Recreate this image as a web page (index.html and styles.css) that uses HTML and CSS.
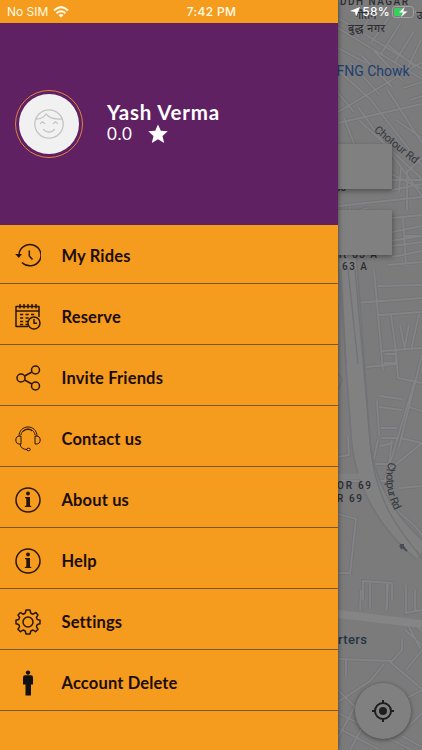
FILE: index.html
```html
<!DOCTYPE html>
<html lang="en">
<head>
<meta charset="utf-8">
<title>Menu</title>
<link rel="stylesheet" href="styles.css">
</head>
<body>
<svg class="map" width="422" height="750" viewBox="0 0 422 750">
  <defs>
    <g id="roads" fill="none">
      <path d="M338 18L422 69M338 28L422 79M338 112L422 62M338 123L422 104M344 118L371 187M358 107L422 196M370 99L422 166M387 89L422 143M338 70L370 99M350 62L380 95M361 55L392 87M374 51L402 80M388 45L416 67M338 48L366 63M400 24L381 54M414 31L395 62M421 40L408 67M374 11L357 37M389 17L371 43M338 93L354 112M403 88L422 82M410 100L422 96"/>
      <path d="M359 120L422 179M390 142L385 171L422 189M396 120L422 138M401 168L399 192M407 172L422 158M392 180H422M392 190L422 184M407 170V210M338 206L422 197M350 207L352 270M338 217L368 208M352 247L422 236M392 218L422 215M392 232L422 226M403 218L406 266M392 246L422 242M405 236H422M392 257L422 251M388 265L422 262"/>
      <path d="M374 270L383 370M354 303L422 298M378 286L422 285M379 315L422 312M382 351L422 348M366 367L396 364M391 315L396 351L398 378L422 383M400 325L405 350M409 325L404 350M419 314L411 350M385 354H396V363H384M422 355L399 447M415 380L385 480M408 407L422 411M400 438L422 443M380 396L402 399M377 401L379 435M379 407L402 410M381 428H396M382 438H397M380 446L393 443"/>
      <path d="M338 457L349 455L348 437M338 481H386M338 514L356 519L350 574M338 573H349M373 463L378 440M373 464H389L392 440M389 470L422 443M399 488L422 486M387 492C388 510 414 520 422 535M363 600V581L392 583V600M370 583V609M387 583V609"/>
      <path d="M361 590L360 610M388 584L386 611M406 585V613L422 610M415 590V612M338 659L392 661L402 650V639M389 661L422 689M384 664L370 681L338 702M346 660V675M422 650L406 670M405 630L422 645M411 622L422 631M338 713L412 750M338 728L380 750M356 704L338 738M371 712L350 750M338 690L360 712M398 703L422 690M410 725L422 713M402 736L422 747M408 625L420 648"/>
    </g>
    <path id="chotour" d="M373.500 131L420 168.500"/>
    <path id="chotpur" d="M388.500 462Q382 488 396 513"/>
  </defs>
  <rect width="422" height="750" fill="#7b7b7c"/>
  <use href="#roads" stroke="#737477" stroke-width="3.6"/>
  <use href="#roads" stroke="#848486" stroke-width="1.8"/>
  <g fill="none" stroke-linecap="butt">
    <path d="M346 240L360 430C362 485 390 525 422 552" stroke="#737477" stroke-width="20"/>
    <path d="M346 240L360 430C362 485 390 525 422 552" stroke="#818182" stroke-width="17"/>
    <path d="M341 269L346 364M348 269L358 364M355 269L370 440C374 500 400 532 422 558" stroke="#707275" stroke-width="1.3"/>
    <path d="M338 614L422 624" stroke="#858586" stroke-width="8"/>
    <path d="M338 477L374 476" stroke="#818182" stroke-width="6"/>
    <path d="M338 373L342 380L338 390" stroke="#707174" stroke-width="1.5"/>
  </g>
  <path d="M400 545L407 551M400 545L404 545M400 545L405 548M400 545L402 549" stroke="#4b4d55" stroke-width="2"/>
  <g class="labels">
    <text x="332" y="5" textLength="76">UDDH NAGAR</text>
    <text class="hindi" x="355" y="19">गौतम</text>
    <text class="hindi" x="348" y="32" textLength="37">बुद्ध नगर</text>
    <text class="hindi" x="416.500" y="19">उ</text>
    <text class="place" x="336.500" y="75.500" textLength="73">FNG Chowk</text>
    <text class="road"><textPath href="#chotour" textLength="53">Chotour Rd</textPath></text>
    <text class="road"><textPath href="#chotpur" textLength="50">Chotpur Rd</textPath></text>
    <text x="335" y="191">63</text>
    <text x="336" y="258" textLength="41">nt 63 A</text>
    <text x="342" y="270" textLength="25">63 A</text>
    <text x="337" y="489" textLength="34">OR 69</text>
    <text x="337" y="502" textLength="25">R 69</text>
    <text class="quarters" x="338" y="644" textLength="29">rters</text>
  </g>
</svg>

<div class="fields"><div class="field"></div><div class="field"></div></div>
<div class="locate">
  <svg width="24" height="24" viewBox="0 0 24 24" fill="none" stroke="#1e1e1e" stroke-width="2"><circle cx="12" cy="12" r="8"/><circle cx="12" cy="12" r="4" fill="#1e1e1e" stroke="none"/><path d="M12 1v4M12 19v4M1 12h4M19 12h4"/></svg>
</div>

<aside class="drawer">
  <header class="profile">
    <div class="avatar"><div class="face">
      <svg width="32" height="32" viewBox="0 0 32 32" fill="none" stroke="#c4c4c4" stroke-width="1.300" stroke-linecap="round"><circle cx="16" cy="16" r="14.200"/><path d="M3 11Q10 11 13 6Q18 12 29 11M7.500 15.500q2-3 4 0M20.500 15.500q2-3 4 0M10.500 21.500Q16 27 21.500 21.500"/></svg>
    </div></div>
    <div class="who">
      <div class="name">Yash Verma</div>
      <div class="rating"><span>0.0</span><svg width="20" height="20" viewBox="0 0 20 20"><path fill="#fff" d="M10 0.400L12.800 6.800L19.800 7.300L14.500 12L16.200 19L10 15.300L3.800 19L5.500 12L0.200 7.300L7.200 6.800Z"/></svg></div>
    </div>
  </header>
  <nav class="menu">
    <a class="item"><svg class="icon" viewBox="0 0 26 26"><path d="M4 12A11 10.600 0 1 1 7 19.500M14.300 7.500V13L17.500 16.500"/><path class="solid" d="M0.200 11H7L3.800 15Z"/></svg><span>My Rides</span></a>
    <a class="item"><svg class="icon" viewBox="0 0 26 26"><path d="M13 22.500H1V2.500H24V13M1 7H24M5 0V4.500M9 0V4.500M13 0V4.500M17 0V4.500M21 0V4.500"/><path stroke-dasharray="3.200 2.300" d="M5 10.500H21M5 14H15M5 17.500H13M5 20.500H13"/><circle cx="19" cy="19" r="6"/><path d="M19 15V19.300H22"/></svg><span>Reserve</span></a>
    <a class="item"><svg class="icon" viewBox="0 0 26 26"><circle cx="6" cy="13" r="4"/><circle cx="20.500" cy="5" r="4"/><circle cx="20.500" cy="21" r="4"/><path d="M9.500 11L17 7M9.500 15L17 19"/></svg><span>Invite Friends</span></a>
    <a class="item"><svg class="icon thin" viewBox="0 0 26 26"><path d="M4 10.500C4 -2.200 22 -2.200 22 10.500M6 9C7 1 19 1 20 9M8 5.500Q13 1.500 17 5M6 10V18Q.8 18.500 .8 14T6 10ZM20 10V18Q25.200 18.500 25.200 14T20 10ZM5 18Q6 23.500 12 23.500"/><ellipse cx="13.500" cy="23.500" rx="1.800" ry="1.300"/></svg><span>Contact us</span></a>
    <a class="item"><svg class="icon" viewBox="0 0 26 26"><circle cx="13" cy="13" r="12"/><circle class="solid" cx="13" cy="6.500" r="2"/><path class="solid" d="M10 10H15V18.500L16.300 19.200V20H9.800V19.200L11.300 18.500V11.500L10 11Z"/></svg><span>About us</span></a>
    <a class="item"><svg class="icon" viewBox="0 0 26 26"><circle cx="13" cy="13" r="12"/><circle class="solid" cx="13" cy="6.500" r="2"/><path class="solid" d="M10 10H15V18.500L16.300 19.200V20H9.800V19.200L11.300 18.500V11.500L10 11Z"/></svg><span>Help</span></a>
    <a class="item"><svg class="icon" viewBox="0 0 26 26"><circle cx="13" cy="13" r="5"/><path d="M11 1H15L15.800 4.200L18 5.200L20.800 3.500L23 6L21.400 8.400L22.300 10.500L25 11.200V14.800L22.300 15.500L21.400 17.600L23 20.200L20.500 22.700L18 21L15.800 22L15 25H11L10.200 22L8 21L5.500 22.700L3 20.200L4.600 17.600L3.700 15.500L1 14.800V11.200L3.700 10.500L4.600 8.400L3 6L5.500 3.500L8 5.200L10.200 4.200Z"/></svg><span>Settings</span></a>
    <a class="item"><svg class="icon" viewBox="0 0 26 26"><g fill="#111" stroke="none"><circle cx="13" cy="2.600" r="2.200"/><path d="M10 5.300H16Q18 5.300 18 7.500V14.500H16V25.500H10.500V14.500H8V7.500Q8 5.300 10 5.300Z"/></g></svg><span>Account Delete</span></a>
  </nav>
</aside>

<div class="status">
  <div class="carrier"><span>No SIM</span><svg width="16" height="12" viewBox="0 0 16 12" fill="none" stroke="#fffbe6" stroke-width="2"><path d="M1 4.400Q8-2.100 15 4.400M3.500 7.200Q8 3.300 12.500 7.200"/><path d="M5.500 9Q8 7 10.500 9L8 11.700Z" fill="#fffbe6" stroke="none"/></svg></div>
  <div class="time">7:42 PM</div>
  <div class="power">
    <svg width="10" height="10" viewBox="0 0 10 10"><path fill="#fff" d="M10 0L6 10L5 5L0 4Z"/></svg>
    <span>58%</span>
    <svg width="25" height="12" viewBox="0 0 25 12"><rect x=".5" y=".5" width="21" height="11" rx="3" fill="none" stroke="#a2a2a2"/><path d="M23 4v4q1.500-2 0-4" fill="#a2a2a2"/><rect x="2" y="2" width="10" height="8" rx="1.500" fill="#35d15b"/><path d="M13 .5L6.500 6.800H10.500L8.500 11.500L16 5.200H11.500Z" fill="#fff" stroke="#777" stroke-width=".4"/></svg>
  </div>
</div>
</body>
</html>
```
FILE: styles.css
```css
* { box-sizing: border-box; }
body {
  margin: 0;
  width: 422px;
  height: 750px;
  position: relative;
  overflow: hidden;
  background: #7b7b7c;
  font-family: Lato, "Noto Sans", sans-serif;
}
.map { position: absolute; inset: 0; }
.labels { font: 500 10px Roboto, "Noto Sans", sans-serif; fill: #2c2d30; }
.labels .hindi { font: 500 10.500px "Noto Sans", "Noto Sans Devanagari", sans-serif; }
.labels .place { font-size: 14px; font-weight: 400; fill: #203f70; }
.labels .road { font-size: 11px; font-weight: 400; fill: #35363a; }
.labels .quarters { font-size: 13px; fill: #263542; }

.fields {
  position: absolute;
  top: 144px;
  left: 30px;
  width: 362px;
  display: grid;
  gap: 21px;
}
.field { height: 45px; background: #808080; box-shadow: 1px 2px 5px rgba(0, 0, 0, .35); }
.locate {
  position: absolute;
  left: 355px;
  top: 683px;
  width: 56px;
  height: 56px;
  border-radius: 50%;
  background: #808080;
  box-shadow: 0 1px 4px rgba(0, 0, 0, .45);
  display: grid;
  place-items: center;
}

.drawer {
  position: relative;
  width: 338px;
  height: 750px;
  padding-top: 23px;
  background: #f59b1e;
  box-shadow: 0 0 5px rgba(0, 0, 0, .5);
}
.profile {
  height: 202px;
  padding-left: 15px;
  display: flex;
  align-items: center;
  gap: 24px;
  background: #602163;
}
.avatar {
  width: 68px;
  height: 68px;
  border: 1.500px solid #df8340;
  border-radius: 50%;
  display: grid;
  place-items: center;
}
.face {
  width: 60px;
  height: 60px;
  border-radius: 50%;
  background: #f1f1f2;
  display: grid;
  place-items: center;
}
.who { color: #fff; padding-bottom: 3px; }
.name { font-size: 20.500px; font-weight: 700; line-height: 23px; letter-spacing: .8px; }
.rating { display: flex; align-items: center; gap: 15px; font-size: 17px; line-height: 20px; letter-spacing: .6px; }

.item {
  height: 61px;
  padding: 5px 0 0 15px;
  display: flex;
  align-items: center;
  gap: 20.500px;
  border-bottom: 1px solid #7d5526;
  font-size: 16.500px;
  font-weight: 700;
  letter-spacing: .15px;
  color: #1b0d08;
}
.item:first-child { height: 59px; padding-top: 4px; }
.icon {
  width: 26px;
  height: 26px;
  fill: none;
  stroke: #2b1606;
  stroke-width: 1.500;
  stroke-linejoin: round;
}
.thin { stroke-width: 1; }
.solid { fill: #2b1606; stroke: none; }

.status {
  position: absolute;
  inset: 0 0 auto;
  height: 23px;
  display: grid;
  grid-template-columns: 1fr auto 1fr;
  align-items: center;
  padding: 0 5px 0 7px;
  font: 400 12px Inter, sans-serif;
  color: #fffbe6;
}
.carrier { display: flex; align-items: center; gap: 5px; }
.time { font-weight: 500; letter-spacing: .3px; margin-right: 1px; }
.power { display: flex; align-items: center; justify-content: flex-end; gap: 2px; color: #fff; font-weight: 500; letter-spacing: .3px; }
```
